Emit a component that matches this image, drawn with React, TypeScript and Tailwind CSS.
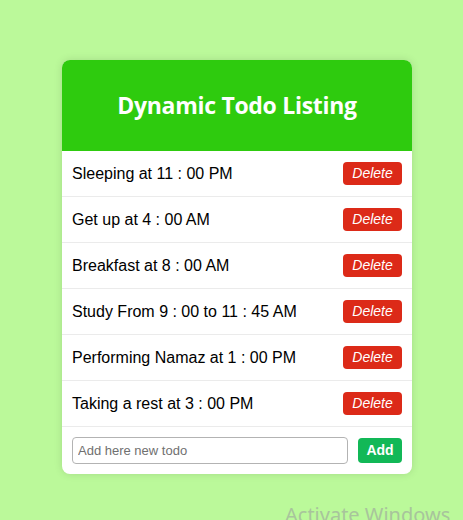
import React from "react";

const todos = [
  "Sleeping at 11 : 00 PM",
  "Get up at 4 : 00 AM",
  "Breakfast at 8 : 00 AM",
  "Study From 9 : 00 to 11 : 45 AM",
  "Performing Namaz at 1 : 00 PM",
  "Taking a rest at 3 : 00 PM",
];

export default function App() {
  return (
    <div className="relative w-[463px] h-[520px] bg-[#bbf99a] overflow-hidden pt-[60px] pl-[62px]">
      <div className="w-[350px] bg-white rounded-[8px] overflow-hidden shadow-[0_0_8px_rgba(0,0,0,0.12)]">
        <div className="h-[91px] bg-[#2ecb0e] flex items-center justify-center">
          <h1 className="text-white font-bold text-[23px] font-['Open_Sans',sans-serif] tracking-[-0.3px]">
            Dynamic Todo Listing
          </h1>
        </div>
        {todos.map((t) => (
          <div
            key={t}
            className="h-[46px] flex items-center justify-between pl-[10px] pr-[10px] border-b border-[#ebebeb] font-['Liberation_Sans',Arial,sans-serif]"
          >
            <span className="text-[16px] text-black">{t}</span>
            <button className="w-[59px] h-[23px] bg-[#dc2a18] text-white italic text-[14px] rounded-[4px] flex items-center justify-center">
              Delete
            </button>
          </div>
        ))}
        <div className="h-[47px] flex items-center pl-[10px] pr-[10px] gap-[10px] font-['Liberation_Sans',Arial,sans-serif]">
          <input
            placeholder="Add here new todo"
            className="w-[276px] h-[27px] border border-[#b3b3b3] rounded-[4px] px-[5px] text-[13px] placeholder:text-[#707070] outline-none"
          />
          <button className="w-[44px] h-[25px] bg-[#12b857] text-white font-bold text-[14px] rounded-[4px]">
            Add
          </button>
        </div>
      </div>
      <div className="absolute left-[285px] top-[505px] text-[20px] text-[#a8c49c] font-['Noto_Sans',sans-serif] whitespace-nowrap leading-none">
        Activate Windows
      </div>
    </div>
  );
}
